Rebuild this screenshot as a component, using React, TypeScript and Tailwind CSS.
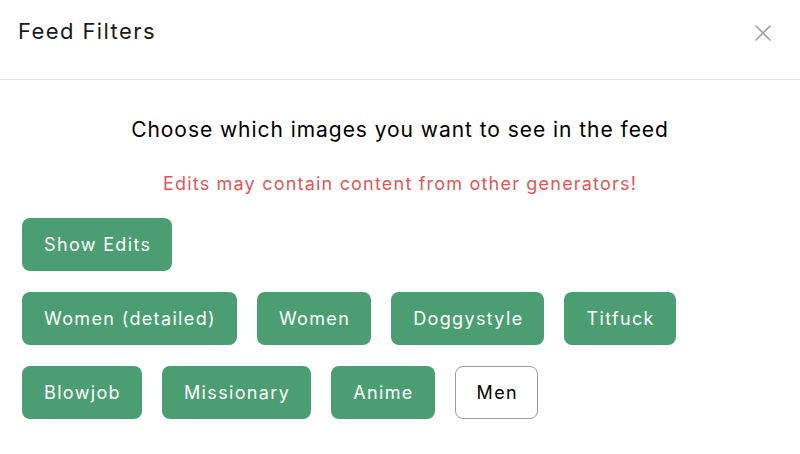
import React from "react";

const active = ["Women (detailed)", "Women", "Doggystyle", "Titfuck"];
const row3 = ["Blowjob", "Missionary", "Anime"];

function Btn({ label, on = true }: { label: string; on?: boolean }) {
  return (
    <button
      className={
        on
          ? "h-[53px] pl-[22px] pr-[21px] rounded-[8px] bg-[#4a9e71] text-white text-[18px] tracking-[1.35px] leading-none"
          : "h-[53px] pl-[21px] pr-[19px] rounded-[8px] bg-white text-black border border-[#9a9a9a] text-[18px] tracking-[1.35px] leading-none"
      }
    >
      {label}
    </button>
  );
}

export default function App() {
  return (
    <div className="w-[800px] h-[454px] bg-white" style={{ fontFamily: "Inter, 'Noto Sans', sans-serif" }}>
      <div className="h-[80px] border-b border-[#e5e5e5] flex items-start justify-between pl-[18px] pr-[28px] pt-[16px]">
        <h1 className="text-[22px] tracking-[1.4px] text-[#1a1a1a] leading-[30px]">Feed Filters</h1>
        <svg width="18" height="18" viewBox="0 0 18 18" className="mt-[8px]">
          <path d="M2 2 L16 16 M16 2 L2 16" stroke="#9ca3af" strokeWidth="1.6" strokeLinecap="round" />
        </svg>
      </div>
      <div className="px-[22px] pt-[35px]">
        <p className="text-center text-[21px] tracking-[0.95px] text-black leading-[30px]">
          Choose which images you want to see in the feed
        </p>
        <p className="text-center text-[18px] tracking-[1.2px] text-[#dc5858] leading-[28px] mt-[25px]">
          Edits may contain content from other generators!
        </p>
        <div className="mt-[20px] flex flex-col gap-[21px]">
          <div className="flex gap-[20px]">
            <Btn label="Show Edits" />
          </div>
          <div className="flex gap-[20px]">
            {active.map((l) => (
              <Btn key={l} label={l} />
            ))}
          </div>
          <div className="flex gap-[20px]">
            {row3.map((l) => (
              <Btn key={l} label={l} />
            ))}
            <Btn label="Men" on={false} />
          </div>
        </div>
      </div>
    </div>
  );
}
